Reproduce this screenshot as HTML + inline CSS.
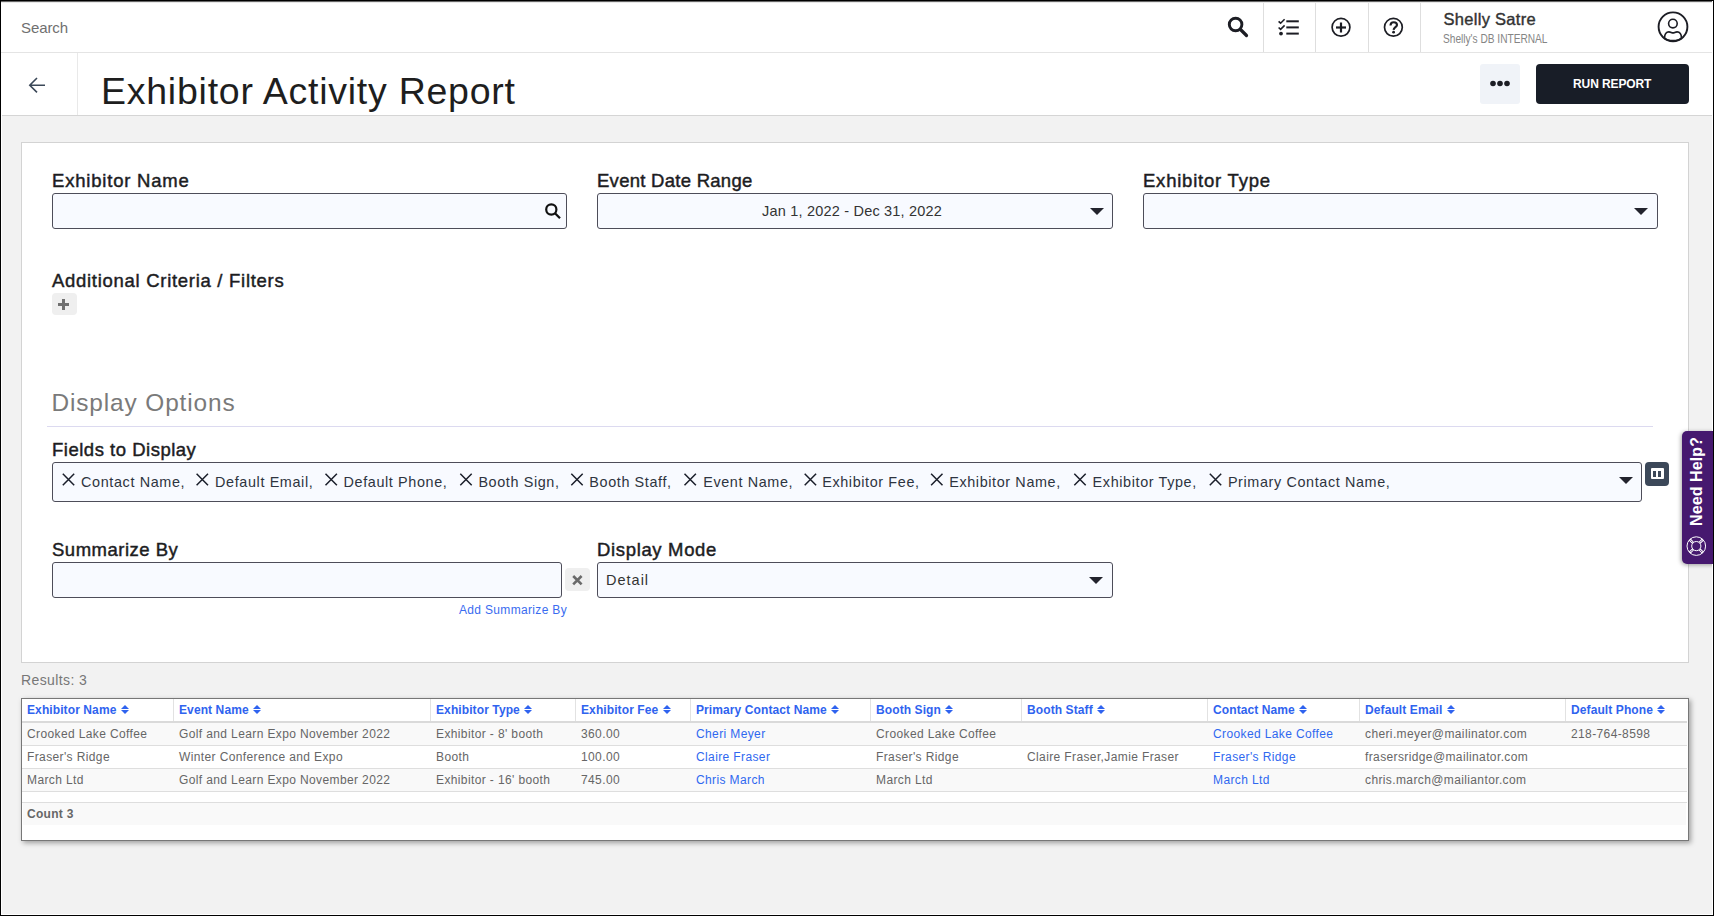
<!DOCTYPE html>
<html><head><meta charset="utf-8">
<style>
*{box-sizing:border-box;margin:0;padding:0}
html,body{width:1714px;height:916px;overflow:hidden;background:#f2f2f2;font-family:"Liberation Sans",sans-serif;position:relative}
.a{position:absolute}
.t{position:absolute;white-space:nowrap;line-height:normal}
.lbl{position:absolute;white-space:nowrap;font-size:18.5px;color:#1d1d1f;-webkit-text-stroke:0.45px #1d1d1f;letter-spacing:0.7px}
.inp{position:absolute;height:36px;background:#f8faff;border:1px solid #4d4d59;border-radius:3px}
.caret{position:absolute;width:0;height:0;border-left:7px solid transparent;border-right:7px solid transparent;border-top:7px solid #22232d}
.tag{font-size:14.4px;color:#2e3440;letter-spacing:0.62px}
.th{font-size:12px;font-weight:bold;color:#2f63ef;letter-spacing:0.1px}
.td{font-size:12px;color:#666;letter-spacing:0.38px}
.lnk{color:#2f68f0}
.cnt{font-size:12px;font-weight:bold;color:#666;letter-spacing:0.3px}
.sort{display:inline-block;position:relative;width:8px;height:10px;margin-left:4.5px;vertical-align:-1px}
.sort:before{content:"";position:absolute;left:0;top:0;border-left:4px solid transparent;border-right:4px solid transparent;border-bottom:4.5px solid #2f63ef}
.sort:after{content:"";position:absolute;left:0;top:5px;border-left:4px solid transparent;border-right:4px solid transparent;border-top:4.5px solid #2f63ef}
svg{position:absolute;overflow:visible}
</style></head><body>

<!-- top bar -->
<div class="a" style="left:0;top:0;width:1714px;height:52px;background:#fff"></div>
<div class="a" style="left:0;top:52px;width:1714px;height:1px;background:#e4e4e4"></div>
<div class="t" style="left:21px;top:19px;font-size:15px;color:#707070;letter-spacing:-0.1px">Search</div>
<div class="a" style="left:1263px;top:2px;width:1px;height:50px;background:#dedede"></div>
<div class="a" style="left:1315px;top:2px;width:1px;height:50px;background:#dedede"></div>
<div class="a" style="left:1368px;top:2px;width:1px;height:50px;background:#dedede"></div>
<div class="a" style="left:1420px;top:2px;width:1px;height:50px;background:#dedede"></div>
<!-- search icon -->
<svg style="left:0;top:0" width="1714" height="60">
  <circle cx="1235.6" cy="24.5" r="6.3" fill="none" stroke="#1c1d24" stroke-width="2.9"/>
  <line x1="1240.5" y1="29.5" x2="1246.5" y2="35.5" stroke="#1c1d24" stroke-width="3.2" stroke-linecap="round"/>
  <!-- list icon -->
  <polyline points="1278.6,21.3 1280.6,23.2 1284.6,19.2" fill="none" stroke="#1c1d24" stroke-width="1.6"/>
  <polyline points="1278.6,27.5 1280.6,29.4 1284.6,25.4" fill="none" stroke="#1c1d24" stroke-width="1.6"/>
  <circle cx="1281" cy="33.6" r="1.9" fill="#1c1d24"/>
  <line x1="1286.3" y1="21.3" x2="1298.8" y2="21.3" stroke="#1c1d24" stroke-width="2"/>
  <line x1="1286.3" y1="27.4" x2="1298.8" y2="27.4" stroke="#1c1d24" stroke-width="2"/>
  <line x1="1286.3" y1="33.6" x2="1298.8" y2="33.6" stroke="#1c1d24" stroke-width="2"/>
  <!-- plus circle -->
  <circle cx="1341" cy="27.3" r="8.9" fill="none" stroke="#1c1d24" stroke-width="1.7"/>
  <line x1="1341" y1="22.5" x2="1341" y2="32.5" stroke="#1c1d24" stroke-width="2.2"/>
  <line x1="1336" y1="27.5" x2="1346" y2="27.5" stroke="#1c1d24" stroke-width="2.2"/>
  <!-- help circle -->
  <circle cx="1393.4" cy="27.3" r="8.9" fill="none" stroke="#1c1d24" stroke-width="1.7"/>
  <path d="M1390.5,25.4 C1390.5,23 1392,22.2 1393.8,22.2 C1395.8,22.2 1397,23.4 1397,25 C1397,27 1393.8,27.4 1393.6,29.8" fill="none" stroke="#1c1d24" stroke-width="2.1"/>
  <circle cx="1393.6" cy="32.2" r="1.4" fill="#1c1d24"/>
  <!-- avatar -->
  <circle cx="1673" cy="26.8" r="14.4" fill="none" stroke="#1c1d24" stroke-width="1.9"/>
  <circle cx="1672.9" cy="23.6" r="4.3" fill="none" stroke="#1c1d24" stroke-width="1.6"/>
  <path d="M1664.6,37.8 C1664.4,34 1666.3,31.9 1668.9,31.9 C1670.9,31.9 1671.5,32.9 1673,32.9 C1674.5,32.9 1675.1,31.9 1677.1,31.9 C1679.7,31.9 1681.6,34 1681.4,37.8 C1680,40.2 1676.5,40.6 1673,40.6 C1669.5,40.6 1666,40.2 1664.6,37.8 Z" fill="none" stroke="#1c1d24" stroke-width="1.6"/>
</svg>
<div class="t" style="left:1443.5px;top:10px;font-size:16.5px;color:#333;-webkit-text-stroke:0.4px #333;letter-spacing:0.29px">Shelly Satre</div>
<div class="t" style="left:1443px;top:31px;font-size:13px;color:#858585;transform:scaleX(0.78);transform-origin:0 0;letter-spacing:0">Shelly's DB INTERNAL</div>

<!-- title bar -->
<div class="a" style="left:0;top:53px;width:1714px;height:62px;background:#fff"></div>
<div class="a" style="left:0;top:115px;width:1714px;height:1px;background:#d5d5d5"></div>
<div class="a" style="left:77px;top:53px;width:1px;height:62px;background:#e9e9e9"></div>
<svg style="left:0;top:0" width="100" height="120">
  <path d="M45,85.2 L30,85.2 M37,78 L29.8,85.2 L37,92.4" fill="none" stroke="#3b4858" stroke-width="1.6"/>
</svg>
<div class="t" style="left:101px;top:70px;font-size:37.5px;color:#1e1e1e;letter-spacing:0.75px">Exhibitor Activity Report</div>
<div class="a" style="left:1480px;top:64px;width:40px;height:40px;background:#f0f3f8;border-radius:3px"></div>
<svg style="left:0;top:0" width="1714" height="120">
  <circle cx="1493" cy="83.5" r="2.8" fill="#1c1d24"/>
  <circle cx="1500" cy="83.5" r="2.8" fill="#1c1d24"/>
  <circle cx="1507" cy="83.5" r="2.8" fill="#1c1d24"/>
</svg>
<div class="a" style="left:1536px;top:64px;width:153px;height:40px;background:#181d27;border-radius:4px"></div>
<div class="t" style="left:1573px;top:77px;font-size:12px;font-weight:bold;color:#fff;letter-spacing:-0.1px">RUN REPORT</div>

<!-- card -->
<div class="a" style="left:21px;top:142px;width:1668px;height:521px;background:#fff;border:1px solid #d3d3d3"></div>

<div class="lbl" style="left:52px;top:170px;letter-spacing:0.8px">Exhibitor Name</div>
<div class="inp" style="left:52px;top:193px;width:515px"></div>
<svg style="left:0;top:0" width="1714" height="300">
  <circle cx="551.3" cy="209.5" r="5.1" fill="none" stroke="#111" stroke-width="2.2"/>
  <line x1="555" y1="213.3" x2="560" y2="218.3" stroke="#111" stroke-width="2.3"/>
</svg>

<div class="lbl" style="left:597px;top:170px;letter-spacing:0.27px">Event Date Range</div>
<div class="inp" style="left:597px;top:193px;width:516px"></div>
<div class="t" style="left:762px;top:203px;font-size:14.5px;color:#333;letter-spacing:0.2px">Jan 1, 2022 - Dec 31, 2022</div>
<div class="caret" style="left:1090px;top:208px"></div>

<div class="lbl" style="left:1143px;top:170px;letter-spacing:0.78px">Exhibitor Type</div>
<div class="inp" style="left:1143px;top:193px;width:515px"></div>
<div class="caret" style="left:1634px;top:208px"></div>

<div class="lbl" style="left:52px;top:270px;letter-spacing:0.71px">Additional Criteria / Filters</div>
<div class="a" style="left:52px;top:293px;width:25px;height:22px;background:#efefef;border-radius:4px"></div>
<div class="a" style="left:62px;top:299px;width:3px;height:11px;background:#707070"></div>
<div class="a" style="left:58px;top:303px;width:11px;height:3px;background:#707070"></div>

<div class="t" style="left:51.5px;top:389px;font-size:24.4px;color:#7a7a7a;letter-spacing:0.88px">Display Options</div>
<div class="a" style="left:47px;top:426px;width:1606px;height:1px;background:#dcdaf0"></div>

<div class="lbl" style="left:52px;top:439px;letter-spacing:0.51px">Fields to Display</div>
<div class="inp" style="left:52px;top:462px;width:1590px;height:40px"></div>
<svg style="left:0;top:0" width="1714" height="520">
<path d="M62.8,473.8 L74.2,485.2 M74.2,473.8 L62.8,485.2" stroke="#1a1e2a" stroke-width="1.5"/>
<path d="M196.60000000000002,473.8 L208.0,485.2 M208.0,473.8 L196.60000000000002,485.2" stroke="#1a1e2a" stroke-width="1.5"/>
<path d="M325.5,473.8 L336.9,485.2 M336.9,473.8 L325.5,485.2" stroke="#1a1e2a" stroke-width="1.5"/>
<path d="M460.3,473.8 L471.7,485.2 M471.7,473.8 L460.3,485.2" stroke="#1a1e2a" stroke-width="1.5"/>
<path d="M571.3,473.8 L582.7,485.2 M582.7,473.8 L571.3,485.2" stroke="#1a1e2a" stroke-width="1.5"/>
<path d="M684.5,473.8 L695.9000000000001,485.2 M695.9000000000001,473.8 L684.5,485.2" stroke="#1a1e2a" stroke-width="1.5"/>
<path d="M804.6999999999999,473.8 L816.1,485.2 M816.1,473.8 L804.6999999999999,485.2" stroke="#1a1e2a" stroke-width="1.5"/>
<path d="M931.0999999999999,473.8 L942.5,485.2 M942.5,473.8 L931.0999999999999,485.2" stroke="#1a1e2a" stroke-width="1.5"/>
<path d="M1074.3,473.8 L1085.7,485.2 M1085.7,473.8 L1074.3,485.2" stroke="#1a1e2a" stroke-width="1.5"/>
<path d="M1209.8,473.8 L1221.2,485.2 M1221.2,473.8 L1209.8,485.2" stroke="#1a1e2a" stroke-width="1.5"/>
</svg>
<div class="t tag" style="left:81.1px;top:474px">Contact Name,</div>
<div class="t tag" style="left:215.1px;top:474px">Default Email,</div>
<div class="t tag" style="left:343.5px;top:474px">Default Phone,</div>
<div class="t tag" style="left:478.4px;top:474px">Booth Sign,</div>
<div class="t tag" style="left:589.3px;top:474px">Booth Staff,</div>
<div class="t tag" style="left:703.2px;top:474px">Event Name,</div>
<div class="t tag" style="left:822.2px;top:474px">Exhibitor Fee,</div>
<div class="t tag" style="left:949.2px;top:474px">Exhibitor Name,</div>
<div class="t tag" style="left:1092.6px;top:474px">Exhibitor Type,</div>
<div class="t tag" style="left:1227.9px;top:474px">Primary Contact Name,</div>
<div class="caret" style="left:1619px;top:477px"></div>
<div class="a" style="left:1645px;top:462px;width:24px;height:24px;background:#3c4859;border-radius:4px"></div>
<div class="a" style="left:1651px;top:468px;width:13px;height:11px;background:#fff;border-radius:1px"></div>
<div class="a" style="left:1653px;top:471px;width:3.3px;height:6px;background:#3c4859"></div>
<div class="a" style="left:1658px;top:471px;width:3.3px;height:6px;background:#3c4859"></div>

<div class="lbl" style="left:52px;top:539px;letter-spacing:0.5px">Summarize By</div>
<div class="inp" style="left:52px;top:562px;width:510px"></div>
<div class="a" style="left:565px;top:568px;width:25px;height:23px;background:#efefef;border-radius:4px"></div>
<svg style="left:0;top:0" width="1714" height="700">
  <path d="M573.2,576 L581.6,584.4 M581.6,576 L573.2,584.4" stroke="#6a6a6a" stroke-width="2.6"/>
</svg>
<div class="t" style="left:459px;top:603px;font-size:12px;color:#3a6cf0;letter-spacing:0.33px">Add Summarize By</div>

<div class="lbl" style="left:597px;top:539px;letter-spacing:0.66px">Display Mode</div>
<div class="inp" style="left:597px;top:562px;width:516px"></div>
<div class="t" style="left:606px;top:572px;font-size:14.5px;color:#333;letter-spacing:1px">Detail</div>
<div class="caret" style="left:1089px;top:577px"></div>

<div class="t" style="left:21px;top:672px;font-size:14px;color:#777;letter-spacing:0.4px">Results: 3</div>
<div class="a" style="left:21px;top:698px;width:1668px;height:143px;background:#fff;border:1px solid #777;box-shadow:2px 2px 5px rgba(0,0,0,0.35)"></div>
<div class="a" style="left:22px;top:721px;width:1665px;height:2px;background:#dadada"></div>
<div class="a" style="left:173px;top:699px;width:1px;height:22px;background:#e2e2e2"></div>
<div class="a" style="left:430px;top:699px;width:1px;height:22px;background:#e2e2e2"></div>
<div class="a" style="left:575px;top:699px;width:1px;height:22px;background:#e2e2e2"></div>
<div class="a" style="left:690px;top:699px;width:1px;height:22px;background:#e2e2e2"></div>
<div class="a" style="left:870px;top:699px;width:1px;height:22px;background:#e2e2e2"></div>
<div class="a" style="left:1021px;top:699px;width:1px;height:22px;background:#e2e2e2"></div>
<div class="a" style="left:1207px;top:699px;width:1px;height:22px;background:#e2e2e2"></div>
<div class="a" style="left:1359px;top:699px;width:1px;height:22px;background:#e2e2e2"></div>
<div class="a" style="left:1565px;top:699px;width:1px;height:22px;background:#e2e2e2"></div>
<div class="a" style="left:22px;top:723px;width:1665px;height:22px;background:#f9f9f9"></div>
<div class="a" style="left:22px;top:745px;width:1665px;height:1px;background:#dedede"></div>
<div class="a" style="left:22px;top:746px;width:1665px;height:22px;background:#fff"></div>
<div class="a" style="left:22px;top:768px;width:1665px;height:1px;background:#dedede"></div>
<div class="a" style="left:22px;top:769px;width:1665px;height:22px;background:#f9f9f9"></div>
<div class="a" style="left:22px;top:791px;width:1665px;height:1px;background:#dedede"></div>
<div class="a" style="left:22px;top:802px;width:1665px;height:1px;background:#dedede"></div>
<div class="a" style="left:23px;top:803px;width:1663px;height:22px;background:#f9f9f9"></div>
<div class="t th" style="left:27px;top:703px">Exhibitor Name<span class="sort"></span></div>
<div class="t th" style="left:179px;top:703px">Event Name<span class="sort"></span></div>
<div class="t th" style="left:436px;top:703px">Exhibitor Type<span class="sort"></span></div>
<div class="t th" style="left:581px;top:703px">Exhibitor Fee<span class="sort"></span></div>
<div class="t th" style="left:696px;top:703px">Primary Contact Name<span class="sort"></span></div>
<div class="t th" style="left:876px;top:703px">Booth Sign<span class="sort"></span></div>
<div class="t th" style="left:1027px;top:703px">Booth Staff<span class="sort"></span></div>
<div class="t th" style="left:1213px;top:703px">Contact Name<span class="sort"></span></div>
<div class="t th" style="left:1365px;top:703px">Default Email<span class="sort"></span></div>
<div class="t th" style="left:1571px;top:703px">Default Phone<span class="sort"></span></div>
<div class="t td" style="left:27px;top:727px">Crooked Lake Coffee</div>
<div class="t td" style="left:179px;top:727px">Golf and Learn Expo November 2022</div>
<div class="t td" style="left:436px;top:727px">Exhibitor - 8&#x27; booth</div>
<div class="t td" style="left:581px;top:727px">360.00</div>
<div class="t td lnk" style="left:696px;top:727px">Cheri Meyer</div>
<div class="t td" style="left:876px;top:727px">Crooked Lake Coffee</div>
<div class="t td lnk" style="left:1213px;top:727px">Crooked Lake Coffee</div>
<div class="t td" style="left:1365px;top:727px">cheri.meyer@mailinator.com</div>
<div class="t td" style="left:1571px;top:727px">218-764-8598</div>
<div class="t td" style="left:27px;top:750px">Fraser&#x27;s Ridge</div>
<div class="t td" style="left:179px;top:750px">Winter Conference and Expo</div>
<div class="t td" style="left:436px;top:750px">Booth</div>
<div class="t td" style="left:581px;top:750px">100.00</div>
<div class="t td lnk" style="left:696px;top:750px">Claire Fraser</div>
<div class="t td" style="left:876px;top:750px">Fraser&#x27;s Ridge</div>
<div class="t td" style="left:1027px;top:750px">Claire Fraser,Jamie Fraser</div>
<div class="t td lnk" style="left:1213px;top:750px">Fraser&#x27;s Ridge</div>
<div class="t td" style="left:1365px;top:750px">frasersridge@mailinator.com</div>
<div class="t td" style="left:27px;top:773px">March Ltd</div>
<div class="t td" style="left:179px;top:773px">Golf and Learn Expo November 2022</div>
<div class="t td" style="left:436px;top:773px">Exhibitor - 16&#x27; booth</div>
<div class="t td" style="left:581px;top:773px">745.00</div>
<div class="t td lnk" style="left:696px;top:773px">Chris March</div>
<div class="t td" style="left:876px;top:773px">March Ltd</div>
<div class="t td lnk" style="left:1213px;top:773px">March Ltd</div>
<div class="t td" style="left:1365px;top:773px">chris.march@mailiantor.com</div>
<div class="t cnt" style="left:27px;top:807px">Count 3</div>

<!-- need help -->
<div class="a" style="left:1682px;top:431px;width:40px;height:133px;background:#46196f;border-radius:5px 0 0 5px;box-shadow:-1px 1px 4px rgba(0,0,0,0.35)"></div>
<div class="t" style="left:1654px;top:473.5px;width:86px;height:18px;font-size:16px;font-weight:bold;color:#fff;transform:rotate(-90deg);transform-origin:43px 9px;letter-spacing:0.1px;line-height:18px">Need Help?</div>
<svg style="left:0;top:0" width="1714" height="600">
  <circle cx="1696.3" cy="546.1" r="9.3" fill="none" stroke="#fff" stroke-width="1"/>
  <circle cx="1696.3" cy="546.1" r="4.6" fill="none" stroke="#fff" stroke-width="1"/>
  <path d="M1689.7,539.5 L1693,542.8 M1702.9,539.5 L1699.6,542.8 M1689.7,552.7 L1693,549.4 M1702.9,552.7 L1699.6,549.4" stroke="#fff" stroke-width="2.6"/>
  <path d="M1690.4,540.2 L1692.6,542.4 M1702.2,540.2 L1700,542.4 M1690.4,552 L1692.6,549.8 M1702.2,552 L1700,549.8" stroke="#46196f" stroke-width="0.9"/>
</svg>

<!-- frame -->
<div class="a" style="left:0;top:0;width:1714px;height:1px;background:#000"></div>
<div class="a" style="left:0;top:1px;width:1714px;height:1px;background:#666"></div>
<div class="a" style="left:1px;top:2px;width:1711px;height:1px;background:#e8e8e8"></div>
<div class="a" style="left:0;top:0;width:1px;height:916px;background:#000"></div>
<div class="a" style="left:1713px;top:0;width:1px;height:916px;background:#000"></div>
<div class="a" style="left:1712px;top:1px;width:1px;height:430px;background:#fff"></div>
<div class="a" style="left:1712px;top:564px;width:1px;height:351px;background:#fff"></div>
<div class="a" style="left:0;top:915px;width:1714px;height:1px;background:#000"></div>
<div class="a" style="left:1px;top:914px;width:1712px;height:1px;background:#fff"></div>
<div class="a" style="left:1px;top:53px;width:1px;height:861px;background:#fff"></div>
</body></html>
